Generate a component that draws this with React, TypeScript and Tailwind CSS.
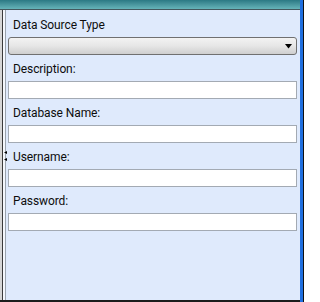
export default function App() {
  const label = "h-4 leading-4 pl-[5px] text-[12px] tracking-[-0.1px] text-[#0d0d0d] whitespace-nowrap";
  const box = "mt-[4px] h-[18px] border border-[#a3aab3] bg-white";
  return (
    <div className="flex w-[304px] h-[302px] overflow-hidden font-['Roboto',sans-serif]">
      <div className="flex flex-col w-[300px]">
        <div className="h-[9px] bg-linear-to-b from-[#2b7984] to-[#66b4b9]" />
        <div className="h-px bg-[#44585e]" />
        <div className="flex flex-1 relative">
          <div className="w-[2px] bg-[#d6d6d6]" />
          <div className="w-px bg-[#3a3a3a]" />
          <div className="w-[2px] bg-[#f4f7fc]" />
          <div className="w-px bg-[#9aa3ad]" />
          <div className="flex-1 bg-[#dfeafc] pl-[2px] pr-[3px] pt-[7px] flex flex-col">
            <div className={label}>Data Source Type</div>
            <div className="mt-[4px] h-[18px] rounded-[3px] border border-[#707070] bg-linear-to-b from-[#f3f3f3] via-[#e6e6e6] to-[#cfcfcf] flex items-center justify-end pr-[3px]">
              <svg width="8" height="5" viewBox="0 0 8 5">
                <polygon points="0,0 7,0 3.5,4.5" fill="#000" />
              </svg>
            </div>
            <div className={"mt-[6px] " + label}>Description:</div>
            <div className={box} />
            <div className={"mt-[6px] " + label}>Database Name:</div>
            <div className={box} />
            <div className={"mt-[6px] " + label}>Username:</div>
            <div className={box} />
            <div className={"mt-[6px] " + label}>Password:</div>
            <div className={box} />
          </div>
          <svg className="absolute left-[4px] top-[141px]" width="4" height="3" viewBox="0 0 4 3">
            <polygon points="0,1.5 3,0 3,3" fill="#000" />
          </svg>
          <svg className="absolute left-[4px] top-[148px]" width="4" height="3" viewBox="0 0 4 3">
            <polygon points="0,1.5 3,0 3,3" fill="#000" />
          </svg>
        </div>
        <div className="h-[2px] bg-[#1b1b1b]" />
      </div>
      <div className="w-[3px] bg-[#1f6fe0]" />
      <div className="w-px bg-[#101010]" />
    </div>
  );
}
